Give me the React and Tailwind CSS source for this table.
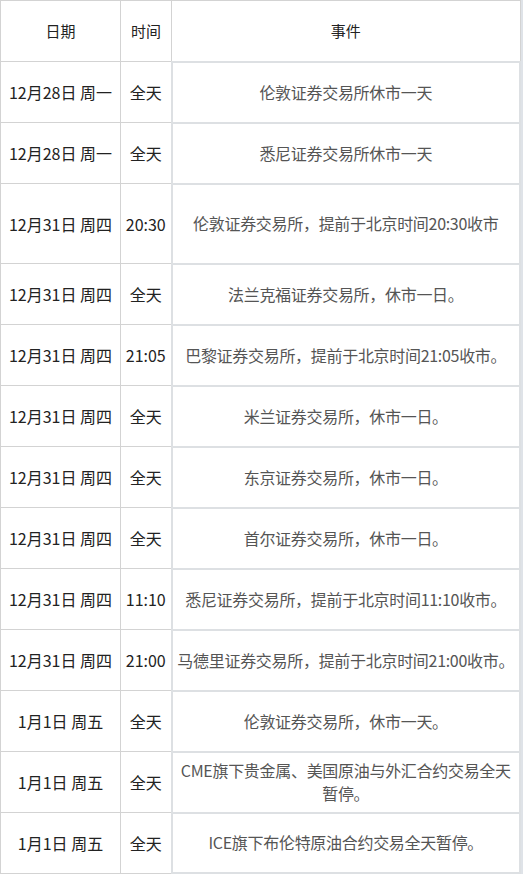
export default function App() {
  const rows = [
    ["12月28日 周一", "全天", "伦敦证券交易所休市一天", 61],
    ["12月28日 周一", "全天", "悉尼证券交易所休市一天", 61],
    ["12月31日 周四", "20:30", "伦敦证券交易所，提前于北京时间20:30收市", 80],
    ["12月31日 周四", "全天", "法兰克福证券交易所，休市一日。", 61],
    ["12月31日 周四", "21:05", "巴黎证券交易所，提前于北京时间21:05收市。", 61],
    ["12月31日 周四", "全天", "米兰证券交易所，休市一日。", 61],
    ["12月31日 周四", "全天", "东京证券交易所，休市一日。", 61],
    ["12月31日 周四", "全天", "首尔证券交易所，休市一日。", 61],
    ["12月31日 周四", "11:10", "悉尼证券交易所，提前于北京时间11:10收市。", 61],
    ["12月31日 周四", "21:00", "马德里证券交易所，提前于北京时间21:00收市。", 61],
    ["1月1日 周五", "全天", "伦敦证券交易所，休市一天。", 61],
    ["1月1日 周五", "全天", "CME旗下贵金属、美国原油与外汇合约交易全天暂停。", 61],
    ["1月1日 周五", "全天", "ICE旗下布伦特原油合约交易全天暂停。", 60],
  ];
  return (
    <div
      className="w-[523px] h-[874px] bg-white overflow-hidden"
      style={{ fontFamily: '"Microsoft YaHei", "Noto Sans CJK SC", "Noto Sans", sans-serif' }}
    >
      <div className="flex">
        <table className="w-[521px] border-collapse table-fixed text-[16px]">
          <colgroup>
            <col className="w-[120px]" />
            <col className="w-[51px]" />
            <col />
          </colgroup>
          <thead>
            <tr className="h-[61px]">
              <th className="border border-[#d3d3d3] font-normal text-[15px] text-[#222] text-center">日期</th>
              <th className="border border-[#d3d3d3] font-normal text-[15px] text-[#222] text-center">时间</th>
              <th className="border border-[#d3d3d3] font-normal text-[15px] text-[#222] text-center">事件</th>
            </tr>
          </thead>
          <tbody>
            {rows.map((r, i) => (
              <tr key={i} style={{ height: r[3] }}>
                <td className="border border-[#d3d3d3] text-[#222] text-center whitespace-nowrap px-0">{r[0]}</td>
                <td className="border border-[#d3d3d3] text-[#222] text-center whitespace-nowrap px-0">{r[1]}</td>
                <td className="border-2 border-[#dde0e3] text-[#555] text-center px-[4px] leading-[23px] tracking-[-0.3px]">{r[2]}</td>
              </tr>
            ))}
          </tbody>
        </table>
        <div className="w-[2px] h-[874px] bg-[#dfe3e8]" />
      </div>
    </div>
  );
}
